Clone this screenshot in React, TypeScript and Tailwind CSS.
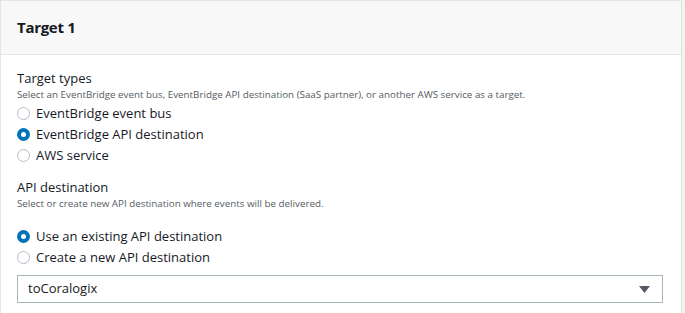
import React from "react";

function Radio({ checked, label }: { checked?: boolean; label: string }) {
  return (
    <div className="flex items-center h-[21px]">
      {checked ? (
        <span className="w-[13px] h-[13px] rounded-full bg-[#0073bb] flex items-center justify-center ml-[16px]">
          <span className="w-[5px] h-[5px] rounded-full bg-white" />
        </span>
      ) : (
        <span className="w-[13px] h-[13px] rounded-full border border-[#b6bec9] bg-white ml-[16px]" />
      )}
      <span className="ml-[6px] text-[13px] text-[#16191f]">{label}</span>
    </div>
  );
}

export default function App() {
  return (
    <div
      className="w-[685px] h-[313px] bg-[#f2f3f3] overflow-hidden"
      style={{ fontFamily: '"Open Sans", "Noto Sans", sans-serif' }}
    >
      <div className="w-[682px] h-[330px] bg-white border border-[#e3e5e6] border-r-[#dfe2e2]">
        <div className="h-[54px] bg-[#f8f8f8] border-b border-[#e3e5e6] flex items-center px-[16px]">
          <h2 className="text-[15px] font-bold text-[#16191f] tracking-[-0.3px]">Target 1</h2>
        </div>
        <div className="pt-[14px]">
          <div className="px-[16px]">
            <div className="text-[13px] font-medium text-[#16191f] leading-[18px]">Target types</div>
            <div className="text-[9.8px] text-[#545b64] leading-[15px]">
              Select an EventBridge event bus, EventBridge API destination (SaaS partner), or another AWS service as a target.
            </div>
          </div>
          <div className="mt-[1px] flex flex-col">
            <Radio label="EventBridge event bus" />
            <Radio checked label="EventBridge API destination" />
            <Radio label="AWS service" />
          </div>
          <div className="px-[16px] mt-[12px]">
            <div className="text-[13px] font-medium text-[#16191f] leading-[18px]">API destination</div>
            <div className="text-[9.8px] text-[#545b64] leading-[15px]">
              Select or create new API destination where events will be delivered.
            </div>
          </div>
          <div className="mt-[15px] flex flex-col">
            <Radio checked label="Use an existing API destination" />
            <Radio label="Create a new API destination" />
          </div>
          <div className="px-[16px] mt-[7px]">
            <div className="w-[646px] h-[28px] border border-[#aab7b8] flex items-center justify-between pl-[10px] pr-[12px]">
              <span className="text-[13px] text-[#16191f]">toCoralogix</span>
              <svg width="11" height="7" viewBox="0 0 11 7">
                <path d="M0 0 H11 L5.5 7 Z" fill="#545b64" />
              </svg>
            </div>
          </div>
        </div>
      </div>
    </div>
  );
}
